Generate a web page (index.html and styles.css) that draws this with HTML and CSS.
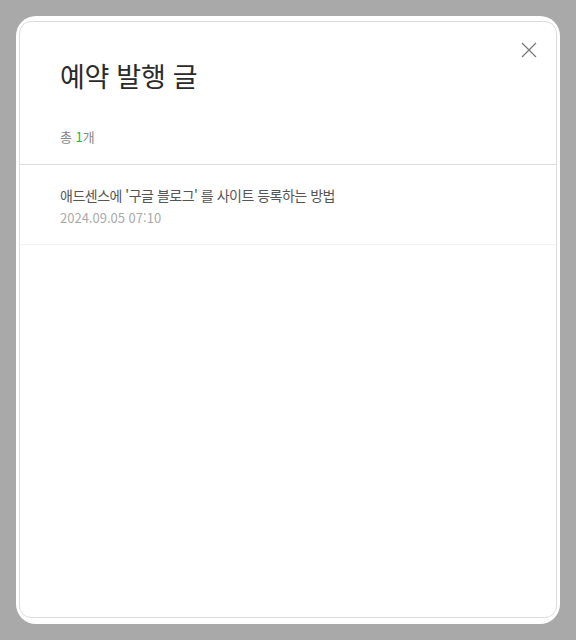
FILE: index.html
```html
<!DOCTYPE html>
<html lang="ko">
<head>
<meta charset="utf-8">
<title>예약 발행 글</title>
<link rel="stylesheet" href="styles.css">
</head>
<body>
<div class="modal">
  <div class="panel">
    <button class="close" aria-label="닫기">
      <svg width="16" height="16" viewBox="0 0 16 16"><path d="M1 1L15 15M15 1L1 15" stroke="#777" stroke-width="1.2" fill="none"/></svg>
    </button>
    <div class="header">
      <h1 class="title">예약 발행 글</h1>
      <p class="count">총 <span class="num">1</span>개</p>
    </div>
    <ul class="list">
      <li class="item">
        <div class="item-title">애드센스에 '구글 블로그' 를 사이트 등록하는 방법</div>
        <div class="item-date">2024.09.05 07:10</div>
      </li>
    </ul>
  </div>
</div>
</body>
</html>
```
FILE: styles.css
```css
html, body {
  margin: 0;
  padding: 0;
  background: #a9a9a9;
}
body {
  font-family: "Noto Sans CJK KR", "Noto Sans", sans-serif;
  height: 640px;
  overflow: hidden;
}
.modal {
  margin: 16px;
  width: 544px;
  height: 608px;
  box-sizing: border-box;
  background: #fff;
  border-radius: 20px;
  padding: 5px 3px 6px 3px;
  overflow: hidden;
}
.panel {
  position: relative;
  height: 100%;
  box-sizing: border-box;
  border: 1px solid #dcdcdc;
  border-radius: 12px;
}
.close {
  position: absolute;
  top: 19px;
  right: 18px;
  width: 18px;
  height: 18px;
  padding: 1px;
  border: 0;
  background: none;
  cursor: pointer;
}
.close svg { display: block; }
.header {
  padding: 36px 40px 18px;
  border-bottom: 1px solid #dcdcdc;
}
.title {
  margin: 0;
  font-size: 27px;
  line-height: 36px;
  font-weight: 400;
  color: #2a2a2a;
  letter-spacing: -0.3px;
}
.count {
  margin: 34px 0 0;
  font-size: 13px;
  line-height: 18px;
  color: #888;
}
.num { color: #00c73c; }
.list {
  list-style: none;
  margin: 0;
  padding: 0;
}
.item {
  padding: 20px 40px 17px;
  border-bottom: 1px solid #f1f1f1;
}
.item-title {
  font-size: 14px;
  line-height: 20px;
  color: #555;
  letter-spacing: -0.5px;
}
.item-date {
  margin-top: 4px;
  font-size: 13px;
  line-height: 18px;
  color: #aaa;
}
```
